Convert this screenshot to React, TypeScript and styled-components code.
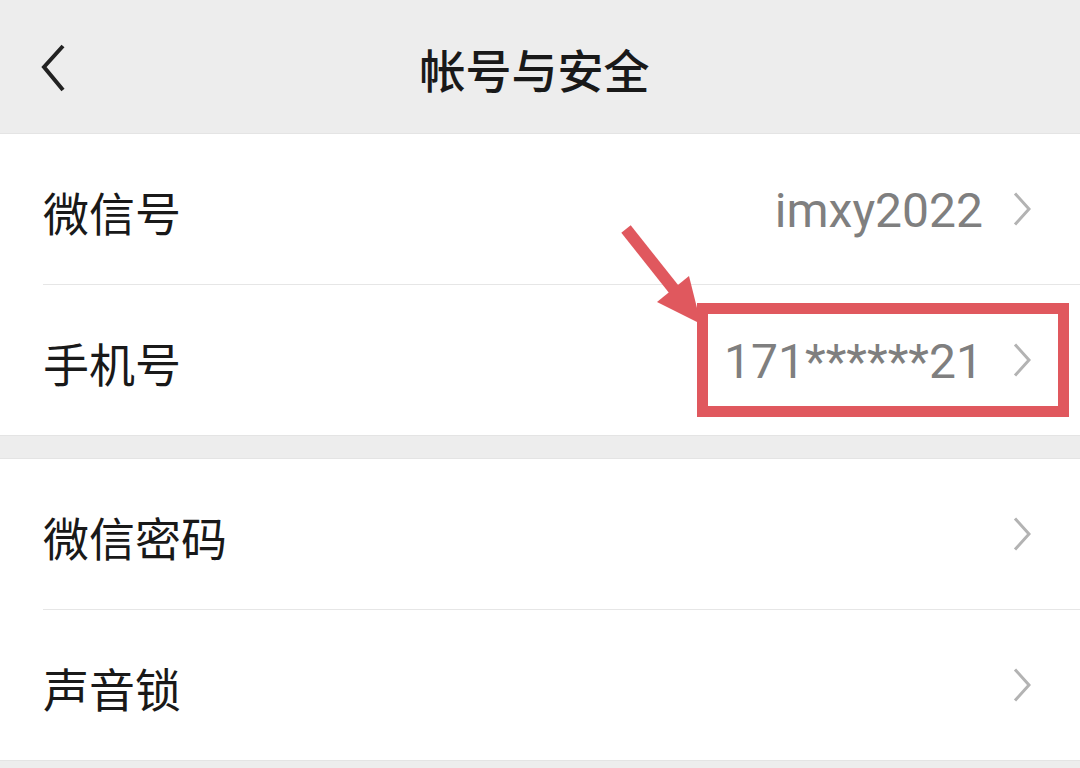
import React from "react";
import styled, { createGlobalStyle } from "styled-components";

const GlobalStyle = createGlobalStyle`
  html, body { margin: 0; padding: 0; background: #ededed; }
  body { font-family: "Noto Sans CJK SC", "Noto Sans", sans-serif; }
`;

const Page = styled.div`
  position: relative;
  width: 1080px;
  height: 768px;
  overflow: hidden;
  background: #ededed;
`;

const Header = styled.header`
  height: 133px;
  display: flex;
  align-items: center;
  justify-content: center;
  position: relative;
  background: #ededed;
`;

const BackButton = styled.div`
  position: absolute;
  left: 40px;
  top: 44px;
  width: 26px;
  height: 48px;
  display: flex;
`;

const Title = styled.h1`
  margin: 2px 11px 0 0;
  font-family: "Noto Sans CJK SC", sans-serif;
  font-size: 46px;
  font-weight: 500;
  color: #191919;
  line-height: 1;
`;

const Group = styled.section<{ $gap?: number }>`
  background: #fff;
  border-top: 1px solid #e4e4e4;
  border-bottom: 1px solid #e4e4e4;
  margin-top: ${(p) => p.$gap ?? 0}px;
`;

const Row = styled.div<{ $divider?: boolean }>`
  height: 150px;
  display: flex;
  align-items: center;
  margin-left: 43px;
  padding-right: 49px;
  border-top: ${(p) => (p.$divider ? "1px solid #e6e6e6" : "none")};
`;

const Label = styled.span`
  flex: 1;
  font-family: "Noto Sans CJK SC", sans-serif;
  font-size: 46px;
  color: #191919;
  line-height: 1;
  margin-top: 4px;
`;

const Value = styled.span`
  font-family: Roboto, "Noto Sans", sans-serif;
  font-size: 48px;
  color: #7f7f7f;
  line-height: 1;
  margin-right: 30px;
  margin-top: 4px;
`;

const Chevron = styled.svg`
  width: 18px;
  height: 34px;
  flex: none;
`;

const Annotation = styled.div`
  position: absolute;
  left: 697px;
  top: 303px;
  width: 372px;
  height: 114px;
  box-sizing: border-box;
  border: 11px solid #e0585e;
  pointer-events: none;
`;

const ArrowSvg = styled.svg`
  position: absolute;
  left: 0;
  top: 0;
  width: 1080px;
  height: 768px;
  pointer-events: none;
`;

const RightChevron = () => (
  <Chevron viewBox="0 0 18 34">
    <polyline
      points="2,1.5 16,17 2,32.5"
      fill="none"
      stroke="#b3b3b3"
      strokeWidth="3"
      strokeLinejoin="miter"
    />
  </Chevron>
);

type Item = { label: string; value?: string };

const groups: Item[][] = [
  [
    { label: "微信号", value: "imxy2022" },
    { label: "手机号", value: "171******21" },
  ],
  [{ label: "微信密码" }, { label: "声音锁" }],
];

export default function App() {
  return (
    <Page>
      <GlobalStyle />
      <Header>
        <BackButton>
          <svg width="26" height="48" viewBox="0 0 26 48">
            <polyline
              points="23,2 4,23 23,46"
              fill="none"
              stroke="#222"
              strokeWidth="4"
            />
          </svg>
        </BackButton>
        <Title>帐号与安全</Title>
      </Header>
      {groups.map((g, gi) => (
        <Group key={gi} $gap={gi === 0 ? 0 : 22}>
          {g.map((item, i) => (
            <Row key={item.label} $divider={i > 0}>
              <Label>{item.label}</Label>
              {item.value && <Value>{item.value}</Value>}
              <RightChevron />
            </Row>
          ))}
        </Group>
      ))}
      <Annotation />
      <ArrowSvg viewBox="0 0 1080 768">
        <line
          x1="626"
          y1="229"
          x2="676"
          y2="292"
          stroke="#e0585e"
          strokeWidth="12"
        />
        <polygon points="657,302 689,276 701,324" fill="#e0585e" />
      </ArrowSvg>
    </Page>
  );
}
